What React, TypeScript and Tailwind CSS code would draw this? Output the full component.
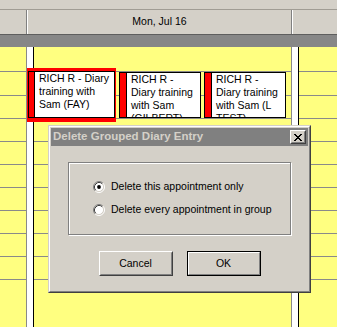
import React from "react";

const rowClasses = [
  "h-[25px] border-b border-[#8a8a8a]",
  "h-[24px] border-b border-[#8a8a8a]",
  "h-[23px] border-b border-[#8a8a8a]",
  "h-[23px] border-b border-[#8a8a8a]",
  "h-[23px] border-b border-[#8a8a8a]",
  "h-[23px] border-b border-[#8a8a8a]",
  "h-[23px] border-b border-[#8a8a8a]",
  "h-[23px] border-b border-[#8a8a8a]",
  "h-[23px] border-b border-[#8a8a8a]",
  "h-[23px] border-b border-[#8a8a8a]",
];

function Rows() {
  return (
    <>
      {rowClasses.map((c, i) => (
        <div key={i} className={c} />
      ))}
    </>
  );
}

function Radio({ checked }: { checked: boolean }) {
  return (
    <svg width="12" height="12" viewBox="0 0 12 12" className="shrink-0">
      <circle cx="6" cy="6" r="4.5" fill="#ffffff" />
      <path d="M2.11 9.89 A5.5 5.5 0 0 1 9.89 2.11" fill="none" stroke="#808080" strokeWidth="1" />
      <path d="M9.89 2.11 A5.5 5.5 0 0 1 2.11 9.89" fill="none" stroke="#ffffff" strokeWidth="1" />
      <path d="M2.82 9.18 A4.5 4.5 0 0 1 9.18 2.82" fill="none" stroke="#404040" strokeWidth="1" />
      <path d="M9.18 2.82 A4.5 4.5 0 0 1 2.82 9.18" fill="none" stroke="#d4d0c8" strokeWidth="1" />
      {checked && <circle cx="6" cy="6" r="1.9" fill="#000000" />}
    </svg>
  );
}

function CloseGlyph() {
  const px: [number, number][] = [
    [0, 0], [1, 0], [6, 0], [7, 0],
    [1, 1], [2, 1], [5, 1], [6, 1],
    [2, 2], [3, 2], [4, 2], [5, 2],
    [3, 3], [4, 3],
    [2, 4], [3, 4], [4, 4], [5, 4],
    [1, 5], [2, 5], [5, 5], [6, 5],
    [0, 6], [1, 6], [6, 6], [7, 6],
  ];
  return (
    <svg width="8" height="7" viewBox="0 0 8 7" shapeRendering="crispEdges">
      {px.map(([x, y], i) => (
        <rect key={i} x={x} y={y} width="1" height="1" fill="#000" />
      ))}
    </svg>
  );
}

export default function App() {
  return (
    <div className="relative w-[337px] h-[327px] overflow-hidden bg-[#ffff80] font-['Liberation_Sans',Arial,sans-serif] text-black">
      {/* top band */}
      <div className="h-[9px] bg-[#d4d0c8]" />
      {/* header */}
      <div className="flex h-[26px] bg-[#d4d0c8] border-t border-t-[#a09c94] border-b border-b-[#5e5e5e]">
        <div className="w-[27px] border-r border-[#808080]" />
        <div className="w-[265px] border-l border-l-white border-r border-r-[#808080] flex items-center justify-center text-[10.5px]">
          Mon, Jul 16
        </div>
        <div className="flex-1 border-l border-white" />
      </div>
      {/* dark band */}
      <div className="h-[12px] bg-[#878787]" />
      {/* body */}
      <div className="flex h-[280px]">
        <div className="w-[27px] border-r border-[#8a8a8a]">
          <Rows />
        </div>
        <div className="w-[7px] bg-white border-r border-black" />
        <div className="w-[258px] border-r border-[#8a8a8a]">
          <Rows />
        </div>
        <div className="w-[7px] bg-white border-r border-black" />
        <div className="flex-1">
          <Rows />
        </div>
      </div>

      {/* appointments */}
      <div className="absolute left-[27px] top-[68px] w-[89px] h-[54px] bg-[#ff0000] pt-[3px] px-px pb-[4px]">
        <div className="h-full flex bg-white border border-black overflow-hidden">
          <div className="w-[6px] shrink-0 bg-[#ff0000] border-r border-black" />
          <div className="pl-[4px] pr-px text-[10.5px] leading-[13px]">RICH R - Diary training with Sam (FAY)</div>
        </div>
      </div>
      <div className="absolute left-[119px] top-[72px] w-[82px] h-[46px] flex bg-white border border-black overflow-hidden">
        <div className="w-[7px] shrink-0 bg-[#ff0000] border-r border-black" />
        <div className="pl-[4px] pr-[3px] text-[10.5px] leading-[13px]">RICH R - Diary training with Sam (GILBERT)</div>
      </div>
      <div className="absolute left-[204px] top-[72px] w-[82px] h-[46px] flex bg-white border border-black overflow-hidden">
        <div className="w-[7px] shrink-0 bg-[#ff0000] border-r border-black" />
        <div className="pl-[4px] pr-[3px] text-[10.5px] leading-[13px]">RICH R - Diary training with Sam (L TEST)</div>
      </div>

      {/* dialog */}
      <div className="absolute left-[48px] top-[125px] w-[263px] h-[168px] bg-[#d4d0c8] border border-t-[#d4d0c8] border-l-[#d4d0c8] border-r-[#404040] border-b-[#404040]">
        <div className="h-full flex flex-col p-px border border-t-white border-l-white border-r-[#808080] border-b-[#808080]">
          <div className="h-[18px] shrink-0 bg-[#808080] flex items-center justify-between pl-[2px] pr-[2px]">
            <span className="text-[#d4d0c8] font-bold text-[11.5px] leading-none">Delete Grouped Diary Entry</span>
            <div className="w-[16px] h-[14px] bg-[#d4d0c8] border border-t-white border-l-white border-r-[#404040] border-b-[#404040]">
              <div className="w-full h-full flex items-center justify-center border border-t-[#d4d0c8] border-l-[#d4d0c8] border-r-[#808080] border-b-[#808080]">
                <CloseGlyph />
              </div>
            </div>
          </div>
          <div className="pl-[17px] pt-[16px]">
            <div className="relative w-[223px] h-[73px] border border-[#808080] shadow-[inset_1px_1px_0_#ffffff,1px_1px_0_#ffffff] pl-[24px] pt-[18px] flex flex-col gap-[11px] text-[10.5px]">
              <div className="flex items-center gap-[6px] h-[12px]">
                <Radio checked={true} />
                <span>Delete this appointment only</span>
              </div>
              <div className="flex items-center gap-[6px] h-[12px]">
                <Radio checked={false} />
                <span>Delete every appointment in group</span>
              </div>
            </div>
          </div>
          <div className="flex justify-center gap-[14px] mt-[16px] text-[10.5px]">
            <div className="w-[74px] h-[25px] border border-t-white border-l-white border-r-[#404040] border-b-[#404040]">
              <div className="w-full h-full flex items-center justify-center border border-t-[#d4d0c8] border-l-[#d4d0c8] border-r-[#808080] border-b-[#808080]">
                Cancel
              </div>
            </div>
            <div className="w-[74px] h-[25px] border border-black">
              <div className="w-full h-full flex items-center justify-center border border-t-white border-l-white border-r-[#808080] border-b-[#808080]">
                OK
              </div>
            </div>
          </div>
        </div>
      </div>
    </div>
  );
}
